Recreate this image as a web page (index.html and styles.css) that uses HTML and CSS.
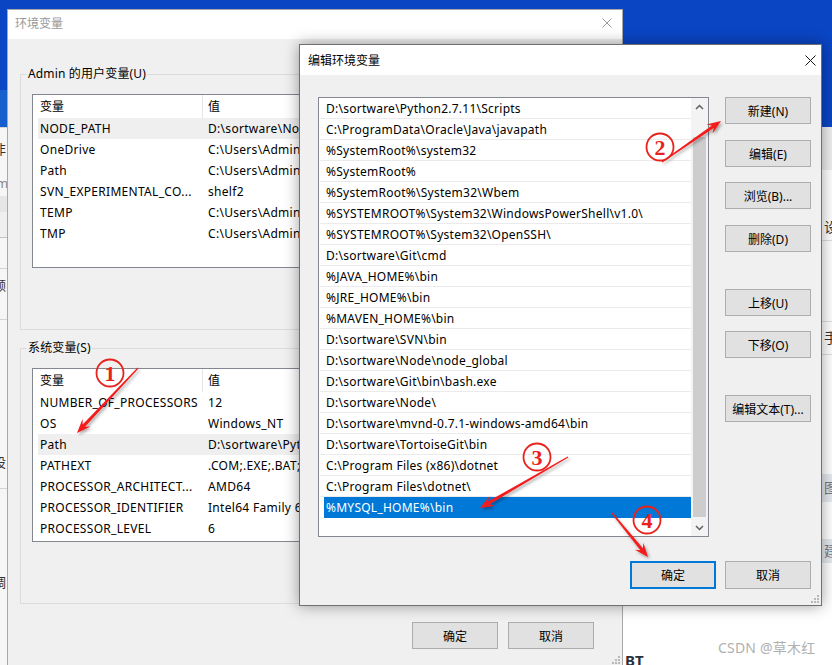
FILE: index.html
```html
<!DOCTYPE html>
<html lang="zh-CN">
<head>
<meta charset="utf-8">
<title>环境变量</title>
<link rel="stylesheet" href="styles.css">
</head>
<body>
<div class="desktop">

  <div class="bgwin bgwin-left">
    <div class="bl-cap"></div>
    <div class="bl-line"></div>
    <div class="bl-row r42 dark">非</div>
    <div class="bl-row r26 grey">m</div>
    <div class="bl-band h16"></div>
    <div class="bl-box"></div>
    <div class="bl-row r30"></div>
    <div class="bl-line"></div>
    <div class="bl-row r32 dark">领</div>
    <div class="bl-line mt18"></div>
    <div class="bl-row r126"></div>
    <div class="bl-row r32 dark">设</div>
    <div class="bl-line mt10"></div>
    <div class="bl-row r77"></div>
    <div class="bl-row r32 dark">调</div>
  </div>

  <div class="bgwin bgwin-right">
    <div class="br-band h43"></div>
    <div class="br-row r44"></div>
    <div class="br-row r26 dark">设</div>
    <div class="br-line"></div>
    <div class="br-row r80"></div>
    <div class="br-line"></div>
    <div class="br-row r32 dark">手</div>
    <div class="br-line"></div>
    <div class="br-row r119"></div>
    <div class="br-band h28 grey">图</div>
    <div class="br-row r37"></div>
    <div class="br-band h24 grey">建</div>
    <div class="br-row r87"></div>
    <div class="br-bt">BT</div>
  </div>

  <div class="win envwin">
    <div class="titlebar env-title">
      <span class="t-inactive">环境变量</span>
      <svg class="xicon" width="10" height="10" viewBox="0 0 10 10"><path d="M0.5 0.5L9.5 9.5M9.5 0.5L0.5 9.5" stroke="#9a9a9a" stroke-width="1" fill="none"/></svg>
    </div>
    <div class="env-body">
      <fieldset class="group g1">
        <legend>Admin 的用户变量(U)</legend>
        <div class="lv">
          <div class="lv-head"><span class="c1">变量</span><span class="c2">值</span></div>
          <div class="lv-row hover"><span class="c1">NODE_PATH</span><span class="c2">D:\sortware\Node\node_global\node_modules</span></div>
          <div class="lv-row"><span class="c1">OneDrive</span><span class="c2">C:\Users\Admin\OneDrive</span></div>
          <div class="lv-row"><span class="c1">Path</span><span class="c2">C:\Users\Admin\AppData\Local\Microsoft\WindowsApps</span></div>
          <div class="lv-row"><span class="c1">SVN_EXPERIMENTAL_CO...</span><span class="c2">shelf2</span></div>
          <div class="lv-row"><span class="c1">TEMP</span><span class="c2">C:\Users\Admin\AppData\Local\Temp</span></div>
          <div class="lv-row"><span class="c1">TMP</span><span class="c2">C:\Users\Admin\AppData\Local\Temp</span></div>
        </div>
      </fieldset>
      <fieldset class="group g2">
        <legend>系统变量(S)</legend>
        <div class="lv">
          <div class="lv-head"><span class="c1">变量</span><span class="c2">值</span></div>
          <div class="lv-row"><span class="c1">NUMBER_OF_PROCESSORS</span><span class="c2">12</span></div>
          <div class="lv-row"><span class="c1">OS</span><span class="c2">Windows_NT</span></div>
          <div class="lv-row hover"><span class="c1">Path</span><span class="c2">D:\sortware\Python2.7.11\Scripts;C:\ProgramData</span></div>
          <div class="lv-row"><span class="c1">PATHEXT</span><span class="c2">.COM;.EXE;.BAT;.CMD;.VBS;.VBE;.JS</span></div>
          <div class="lv-row"><span class="c1">PROCESSOR_ARCHITECT...</span><span class="c2">AMD64</span></div>
          <div class="lv-row"><span class="c1">PROCESSOR_IDENTIFIER</span><span class="c2">Intel64 Family 6 Model 165 Stepping 5</span></div>
          <div class="lv-row"><span class="c1">PROCESSOR_LEVEL</span><span class="c2">6</span></div>
        </div>
      </fieldset>
      <div class="env-foot">
        <button class="btn">确定</button>
        <button class="btn">取消</button>
      </div>
    </div>
    <svg class="grip" width="10" height="10" viewBox="0 0 10 10"><g fill="#b8b8b8"><rect x="7" y="1" width="2" height="2"/><rect x="7" y="4" width="2" height="2"/><rect x="4" y="4" width="2" height="2"/><rect x="7" y="7" width="2" height="2"/><rect x="4" y="7" width="2" height="2"/><rect x="1" y="7" width="2" height="2"/></g></svg>
  </div>

  <div class="win dialog">
    <div class="titlebar dlg-title">
      <span>编辑环境变量</span>
      <svg class="xicon" width="11" height="11" viewBox="0 0 11 11"><path d="M0.5 0.5L10.5 10.5M10.5 0.5L0.5 10.5" stroke="#111" stroke-width="1" fill="none"/></svg>
    </div>
    <div class="dlg-body">
      <div class="dlg-main">
        <div class="pathlist">
          <div class="pl-items">
            <div class="pl-row">D:\sortware\Python2.7.11\Scripts</div>
            <div class="pl-row">C:\ProgramData\Oracle\Java\javapath</div>
            <div class="pl-row">%SystemRoot%\system32</div>
            <div class="pl-row">%SystemRoot%</div>
            <div class="pl-row">%SystemRoot%\System32\Wbem</div>
            <div class="pl-row">%SYSTEMROOT%\System32\WindowsPowerShell\v1.0\</div>
            <div class="pl-row">%SYSTEMROOT%\System32\OpenSSH\</div>
            <div class="pl-row">D:\sortware\Git\cmd</div>
            <div class="pl-row">%JAVA_HOME%\bin</div>
            <div class="pl-row">%JRE_HOME%\bin</div>
            <div class="pl-row">%MAVEN_HOME%\bin</div>
            <div class="pl-row">D:\sortware\SVN\bin</div>
            <div class="pl-row">D:\sortware\Node\node_global</div>
            <div class="pl-row">D:\sortware\Git\bin\bash.exe</div>
            <div class="pl-row">D:\sortware\Node\</div>
            <div class="pl-row">D:\sortware\mvnd-0.7.1-windows-amd64\bin</div>
            <div class="pl-row">D:\sortware\TortoiseGit\bin</div>
            <div class="pl-row">C:\Program Files (x86)\dotnet</div>
            <div class="pl-row">C:\Program Files\dotnet\</div>
            <div class="pl-row sel">%MYSQL_HOME%\bin</div>
          </div>
          <div class="vscroll">
            <svg class="arr" width="17" height="17" viewBox="0 0 17 17"><polyline points="5,11 8.5,7.5 12,11" fill="none" stroke="#606060" stroke-width="1.5"/></svg>
            <div class="thumb"></div>
            <svg class="arr" width="17" height="17" viewBox="0 0 17 17"><polyline points="5,7 8.5,10.5 12,7" fill="none" stroke="#606060" stroke-width="1.5"/></svg>
          </div>
        </div>
        <div class="side-btns">
          <button class="btn">新建(N)</button>
          <button class="btn m16">编辑(E)</button>
          <button class="btn m15">浏览(B)...</button>
          <button class="btn m16">删除(D)</button>
          <button class="btn m37">上移(U)</button>
          <button class="btn m15">下移(O)</button>
          <button class="btn m37">编辑文本(T)...</button>
        </div>
      </div>
      <div class="dlg-foot">
        <button class="btn default">确定</button>
        <button class="btn">取消</button>
      </div>
    </div>
    <svg class="grip" width="10" height="10" viewBox="0 0 10 10"><g fill="#b8b8b8"><rect x="7" y="1" width="2" height="2"/><rect x="7" y="4" width="2" height="2"/><rect x="4" y="4" width="2" height="2"/><rect x="7" y="7" width="2" height="2"/><rect x="4" y="7" width="2" height="2"/><rect x="1" y="7" width="2" height="2"/></g></svg>
  </div>

  <div class="watermark">CSDN @草木红</div>

  <svg class="marks" width="832" height="665" viewBox="0 0 832 665">
    <defs>
      <filter id="sh" x="-30%" y="-30%" width="160%" height="160%">
        <feDropShadow dx="1.5" dy="2" stdDeviation="1.5" flood-color="#000" flood-opacity="0.35"/>
      </filter>
    </defs>
    <g fill="#f31c1c" filter="url(#sh)">
      <polygon points="137.56,367.59 82.67,424.62 82.57,419.03 77,433 90.59,426.55 85.01,426.80 138.44,368.41"/>
      <polygon points="662.34,162.49 713.70,128.02 712.64,133.51 721,121 706.36,124.47 711.88,125.40 661.66,161.51"/>
      <polygon points="567.70,456.48 487.85,501.61 489.35,496.22 480,508 494.87,505.74 489.45,504.37 568.30,457.52"/>
      <polygon points="611.54,513.38 640.43,550.27 634.88,549.64 648,557 643.40,542.68 642.91,548.25 612.46,512.62"/>
    </g>
    <g class="num">
      <circle cx="110" cy="373" r="13.5" fill="none" stroke="#e8221c" stroke-width="1.8"/>
      <text x="110" y="381" text-anchor="middle">1</text>
      <circle cx="660" cy="147" r="13.5" fill="none" stroke="#e8221c" stroke-width="1.8"/>
      <text x="660" y="155" text-anchor="middle">2</text>
      <circle cx="537" cy="457" r="13.5" fill="none" stroke="#e8221c" stroke-width="1.8"/>
      <text x="537" y="465" text-anchor="middle">3</text>
      <circle cx="647" cy="520" r="13.5" fill="none" stroke="#e8221c" stroke-width="1.8"/>
      <text x="647" y="528" text-anchor="middle">4</text>
    </g>
  </svg>
</div>
</body>
</html>
```

FILE: styles.css
```css
* { box-sizing: border-box; }
html, body { margin: 0; padding: 0; }
body {
  font-family: "Noto Sans", "Noto Sans CJK SC", sans-serif;
  font-size: 12px;
  color: #000;
  background: #0a45c4;
}

.desktop {
  position: relative;
  width: 832px;
  height: 665px;
  overflow: hidden;
  background: #0a45c4;
}

/* ---------- background windows ---------- */
.bgwin {
  position: absolute;
  display: flex;
  flex-direction: column;
  background: #fff;
  overflow: hidden;
}
.bgwin-left { left: 0; top: 90px; width: 8px; height: 575px; background: #f6f6f6; }
.bgwin-right { left: 622px; top: 127px; width: 210px; height: 538px; }

.bl-cap { height: 37px; background: #1560cd; flex: none; }
.bl-line { height: 1px; background: #d4d4d4; flex: none; }
.bl-line.mt18 { margin-top: 18px; }
.bl-line.mt10 { margin-top: 10px; }
.bl-row { flex: none; font-size: 13px; margin-left: -7px; white-space: nowrap; }
.bl-row.dark { color: #333; }
.bl-row.grey { color: #8a8a8a; margin-left: -4px; }
.r26 { height: 26px; line-height: 26px; }
.r30 { height: 30px; }
.r32 { height: 32px; line-height: 32px; }
.r37 { height: 37px; }
.r42 { height: 42px; line-height: 42px; }
.r44 { height: 44px; line-height: 44px; }
.r77 { height: 77px; }
.r80 { height: 80px; }
.r87 { height: 87px; }
.r119 { height: 119px; }
.r126 { height: 126px; }
.bl-band { flex: none; background: #e6e6e6; }
.h16 { height: 16px; }
.bl-box { flex: none; height: 26px; background: #efefef; border-right: 1px solid #c4c4c4; border-bottom: 1px solid #c4c4c4; }

.br-band { flex: none; background: #eeeeee; padding-left: 202px; font-size: 14px; white-space: nowrap; }
.br-band.grey { background: #e6e9ee; color: #777; }
.h43 { height: 43px; }
.h28 { height: 28px; line-height: 28px; }
.h24 { height: 24px; line-height: 24px; }
.br-row { flex: none; padding-left: 202px; font-size: 14px; white-space: nowrap; }
.br-row.dark { color: #333; }
.br-line { flex: none; height: 1px; background: #dedede; }
.br-bt { flex: none; padding-left: 3px; font-size: 15px; font-weight: bold; color: #2a2f3a; line-height: 20px; }

/* ---------- generic window ---------- */
.win {
  position: absolute;
  display: flex;
  flex-direction: column;
  background: #f0f0f0;
}
.titlebar {
  flex: none;
  display: flex;
  align-items: center;
  justify-content: space-between;
  background: #fff;
}
.xicon { display: block; flex: none; }

/* ---------- 环境变量 window ---------- */
.envwin {
  left: 7px;
  top: 9px;
  width: 616px;
  height: 658px;
  border: 1px solid #a8a8a8;
}
.env-title {
  height: 29px;
  padding: 0 10px 3px 7px;
}
.t-inactive { color: #999; }

.env-body { padding: 0 12px; display: flex; flex-direction: column; }

.group {
  margin: 0;
  border: 1px solid #dcdcdc;
  padding: 12px 11px 61px 11px;
  min-width: 0;
}
.group legend {
  padding: 0 1px;
  margin-left: -5px;
  line-height: 16px;
  height: 16px;
  letter-spacing: 0.15px;
}
.g1 { margin-top: 27px; }
.g2 { margin-top: 10px; }

.lv {
  height: 174px;
  border: 1px solid #828790;
  background: #fff;
  overflow: hidden;
}
.lv-head { display: flex; height: 23px; line-height: 23px; }
.lv-head .c1 { width: 169px; padding-left: 7px; flex: none; }
.lv-head .c2 { border-left: 1px solid #e5e5e5; padding-left: 5px; height: 23px; }
.lv-row {
  display: flex;
  height: 21px;
  line-height: 21px;
  margin-left: 5px;
  white-space: nowrap;
  letter-spacing: 0.3px;
}
.lv-row.hover { background: #efefef; }
.lv-row .c1 { width: 164px; padding-left: 2px; flex: none; overflow: hidden; }
.lv-row .c2 { padding-left: 6px; }

.env-foot {
  display: flex;
  justify-content: flex-end;
  gap: 10px;
  margin-top: 18px;
  padding-right: 16px;
}

.grip { position: absolute; right: 1px; bottom: 1px; }

/* ---------- buttons ---------- */
.btn {
  font: inherit;
  color: #000;
  margin: 0;
  padding: 0;
  width: 86px;
  height: 27px;
  background: #e1e1e1;
  border: 1px solid #adadad;
  flex: none;
}
.btn.default {
  border-color: #0078d7;
  box-shadow: inset 0 0 0 1px #0078d7;
}
.m15 { margin-top: 15px; }
.m16 { margin-top: 16px; }
.m37 { margin-top: 37px; }

/* ---------- 编辑环境变量 dialog ---------- */
.dialog {
  left: 299px;
  top: 44px;
  width: 523px;
  height: 562px;
  border: 1px solid #707070;
  box-shadow: 0 0 14px rgba(0, 0, 0, 0.38);
}
.dlg-title {
  height: 30px;
  padding: 0 5px 0 8px;
}
.dlg-body { padding: 22px 10px 0 18px; display: flex; flex-direction: column; }
.dlg-main { display: flex; gap: 16px; }

.pathlist {
  width: 391px;
  height: 440px;
  border: 1px solid #828790;
  background: #fff;
  display: flex;
  flex: none;
}
.pl-items { flex: 1; min-width: 0; overflow: hidden; }
.pl-row {
  height: 21px;
  line-height: 21px;
  margin-left: 1px;
  padding-left: 6px;
  border-bottom: 1px solid #ebebeb;
  white-space: nowrap;
  overflow: hidden;
  letter-spacing: 0.25px;
}
.pl-row.sel {
  margin-left: 5px;
  padding-left: 2px;
  background: #0078d7;
  color: #fff;
  border-bottom-color: #0078d7;
}
.vscroll {
  width: 17px;
  flex: none;
  display: flex;
  flex-direction: column;
  background: #f3f3f3;
}
.arr { display: block; flex: none; }
.thumb {
  height: 380px;
  margin: 22px 2px 2px 2px;
  background: #cdcdcd;
  flex: none;
}

.side-btns { display: flex; flex-direction: column; width: 86px; flex: none; }

.dlg-foot {
  display: flex;
  justify-content: flex-end;
  gap: 9px;
  margin-top: 24px;
}
.dlg-foot .btn { height: 28px; }

/* ---------- overlays ---------- */
.watermark {
  position: absolute;
  left: 718px;
  top: 638px;
  font-size: 14px;
  line-height: 20px;
  color: #b0b0b0;
  white-space: nowrap;
  letter-spacing: 0.2px;
}
.marks { position: absolute; left: 0; top: 0; pointer-events: none; }
.num text {
  font-family: "Liberation Serif", "DejaVu Serif", serif;
  font-size: 22px;
  font-weight: bold;
  fill: #e8221c;
}
```
